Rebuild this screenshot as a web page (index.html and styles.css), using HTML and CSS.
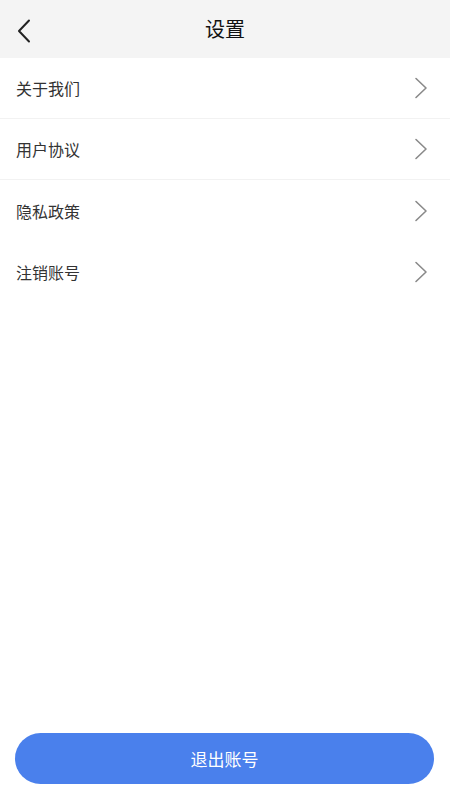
FILE: index.html
```html
<!DOCTYPE html>
<html lang="zh">
<head>
<meta charset="utf-8">
<title>设置</title>
<link rel="stylesheet" href="styles.css">
</head>
<body>
<div class="page">
  <header class="header">
    <span class="back">
      <svg width="14" height="24" viewBox="0 0 14 24"><path d="M12 1.5 L2 12 L12 22.5" fill="none" stroke="#222" stroke-width="2" stroke-linecap="round" stroke-linejoin="round"/></svg>
    </span>
    <h1 class="title">设置</h1>
  </header>
  <ul class="list">
    <li class="item sep"><span>关于我们</span><svg class="chev" width="14" height="22" viewBox="0 0 14 22"><path d="M2 1.5 L12 11 L2 20.5" fill="none" stroke="#8a8a8a" stroke-width="1.6" stroke-linecap="round" stroke-linejoin="round"/></svg></li>
    <li class="item sep"><span>用户协议</span><svg class="chev" width="14" height="22" viewBox="0 0 14 22"><path d="M2 1.5 L12 11 L2 20.5" fill="none" stroke="#8a8a8a" stroke-width="1.6" stroke-linecap="round" stroke-linejoin="round"/></svg></li>
    <li class="item"><span>隐私政策</span><svg class="chev" width="14" height="22" viewBox="0 0 14 22"><path d="M2 1.5 L12 11 L2 20.5" fill="none" stroke="#8a8a8a" stroke-width="1.6" stroke-linecap="round" stroke-linejoin="round"/></svg></li>
    <li class="item"><span>注销账号</span><svg class="chev" width="14" height="22" viewBox="0 0 14 22"><path d="M2 1.5 L12 11 L2 20.5" fill="none" stroke="#8a8a8a" stroke-width="1.6" stroke-linecap="round" stroke-linejoin="round"/></svg></li>
  </ul>
  <div class="footer">
    <button class="logout">退出账号</button>
  </div>
</div>
</body>
</html>
```
FILE: styles.css
```css
* { box-sizing: border-box; }
html, body { margin: 0; padding: 0; }
body {
  background: #fff;
  font-family: "Noto Sans CJK SC", "Noto Sans", sans-serif;
  color: #333;
}
.page {
  height: 802px;
  display: flex;
  flex-direction: column;
}
.header {
  height: 58px;
  background: #f4f4f4;
  display: flex;
  align-items: center;
  justify-content: center;
  position: relative;
}
.back {
  position: absolute;
  left: 17px;
  top: 19px;
  display: flex;
}
.title {
  margin: 0;
  font-size: 20px;
  font-weight: 400;
  color: #111;
  line-height: 1;
}
.list {
  list-style: none;
  margin: 0;
  padding: 0;
}
.item {
  height: 61px;
  display: flex;
  align-items: center;
  justify-content: space-between;
  padding: 0 22px 0 16px;
  font-size: 16px;
  color: #333;
}
.item.sep { border-bottom: 1px solid #f2f2f2; }
.chev { display: block; }
.footer {
  margin-top: auto;
  padding: 0 16px 18px 15px;
}
.logout {
  width: 100%;
  height: 51px;
  border: none;
  border-radius: 26px;
  background: #4a80ec;
  color: #fff;
  font-family: "Noto Sans CJK SC", "Noto Sans", sans-serif;
  font-size: 17px;
  padding: 0;
}
```
